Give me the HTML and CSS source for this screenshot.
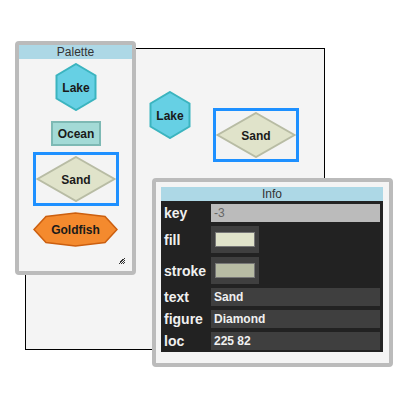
FILE: index.html
```html
<!DOCTYPE html>
<html lang="en">
<head>
  <meta charset="UTF-8" />
  <title>Diagram Editor</title>
  <link rel="stylesheet" href="styles.css">
</head>
<body>
  <div class="stage">
    <!-- Main diagram canvas -->
    <div class="diagram">
      <svg class="node node-lake" width="42" height="48" viewBox="0 0 42 48">
        <polygon points="21,1 40.5,12.5 40.5,35.5 21,47 1.5,35.5 1.5,12.5" fill="#66d0e4" stroke="#3bb4bf" stroke-width="2"/>
        <text x="21" y="28.5" class="label">Lake</text>
      </svg>
      <div class="node node-sand selected">
        <svg width="80" height="46" viewBox="0 0 80 46">
          <polygon points="40,1 78.5,23 40,45 1.5,23" fill="#e0e3ca" stroke="#b8bca4" stroke-width="2"/>
          <text x="40" y="27.5" class="label">Sand</text>
        </svg>
      </div>
    </div>

    <!-- Palette window -->
    <div class="palette">
      <div class="panel-title">Palette</div>
      <div class="palette-items">
        <svg class="lake" width="42" height="48" viewBox="0 0 42 48">
          <polygon points="21,1 40.5,12.5 40.5,35.5 21,47 1.5,35.5 1.5,12.5" fill="#66d0e4" stroke="#3bb4bf" stroke-width="2"/>
          <text x="21" y="28.5" class="label">Lake</text>
        </svg>
        <svg class="ocean" width="50" height="25" viewBox="0 0 50 25">
          <rect x="1" y="1" width="48" height="23" fill="#a3dad6" stroke="#7db9b4" stroke-width="2"/>
          <text x="25" y="17" class="label">Ocean</text>
        </svg>
        <div class="selected">
          <svg width="80" height="46" viewBox="0 0 80 46">
            <polygon points="40,1 78.5,23 40,45 1.5,23" fill="#e0e3ca" stroke="#b8bca4" stroke-width="2"/>
            <text x="40" y="27.5" class="label">Sand</text>
          </svg>
        </div>
        <svg class="goldfish" width="85" height="35" viewBox="0 0 85 35">
          <polygon points="1,17.5 13,4.5 42.5,1 72,4.5 84,17.5 72,30.5 42.5,34 13,30.5" fill="#f48a2e" stroke="#cc5f0f" stroke-width="1.5"/>
          <text x="42.5" y="22" class="label">Goldfish</text>
        </svg>
      </div>
      <svg class="grip" width="7" height="7" viewBox="0 0 7 7">
        <path d="M6 0 L0 6 M6 2 L2 6 M6 4 L4 6 M4 1 L1 4 M5 3 L3 5" stroke="#333" stroke-width="1"/>
      </svg>
    </div>

    <!-- Info / inspector window -->
    <div class="info">
      <div class="panel-title">Info</div>
      <div class="inspector">
        <div class="prop">key</div>
        <div class="field readonly">-3</div>
        <div class="prop">fill</div>
        <div class="swatch-box"><div class="swatch fill-swatch"></div></div>
        <div class="prop">stroke</div>
        <div class="swatch-box"><div class="swatch stroke-swatch"></div></div>
        <div class="prop">text</div>
        <div class="field">Sand</div>
        <div class="prop">figure</div>
        <div class="field">Diamond</div>
        <div class="prop">loc</div>
        <div class="field">225 82</div>
      </div>
    </div>
  </div>
</body>
</html>
```

FILE: styles.css
```css
body {
  margin: 0;
  font-family: "Liberation Sans", Arial, sans-serif;
  background: #fff;
}

/* Whole picture */
.stage {
  position: relative;
  width: 400px;
  height: 400px;
  padding: 48px 0 0 25px;
  box-sizing: border-box;
}

/* Diagram canvas */
.diagram {
  position: relative;
  width: 300px;
  height: 302px;
  box-sizing: border-box;
  border: 1px solid #000;
  background: #f4f4f4;
}

.node {
  position: absolute;
  display: block;
}
.node-lake {
  left: 123px;
  top: 42px;
}
.node-sand {
  left: 187px;
  top: 59px;
}

/* Node text */
.label {
  font: bold 12px "Liberation Sans", Arial, sans-serif;
  fill: #1a1a1a;
  text-anchor: middle;
}

/* Selection adornment */
.selected {
  border: 3px solid #1e90ff;
  padding: 1px 0;
  width: 80px;
  display: flex;
  justify-content: center;
}
.selected svg {
  display: block;
}

/* Floating windows */
.palette,
.info {
  position: absolute;
  background: #f4f4f4;
  border: 4px solid #bbb;
  border-radius: 4px;
  box-sizing: border-box;
}

.palette {
  left: 15px;
  top: 41px;
  width: 121px;
  height: 234px;
}

.panel-title {
  height: 14px;
  line-height: 14px;
  background: #add8e6;
  color: #333;
  font-size: 12px;
  text-align: center;
}

.palette-items {
  display: flex;
  flex-direction: column;
  align-items: center;
  padding-top: 4px;
}
.palette-items svg {
  display: block;
}
.palette-items .ocean {
  margin-top: 10px;
}
.palette-items .selected {
  margin-top: 6px;
  margin-left: 1px;
}
.palette-items .goldfish {
  margin-top: 6px;
}

.grip {
  position: absolute;
  right: 6px;
  bottom: 6px;
}

/* Inspector */
.info {
  left: 152px;
  top: 178px;
  width: 241px;
  height: 189px;
  padding: 5px 6px 11px 5px;
}

.inspector {
  display: grid;
  grid-template-columns: 47px 1fr;
  row-gap: 4px;
  align-items: center;
  background: #222;
  padding: 3px 3px 2px 3px;
}

.prop {
  color: #f0f0f0;
  font-weight: bold;
  font-size: 14px;
}

.field {
  height: 18px;
  line-height: 18px;
  background: #3f3f3f;
  color: #f0f0f0;
  font-weight: bold;
  font-size: 12px;
  padding-left: 3px;
}
.field.readonly {
  background: #bbb;
  color: #666;
  font-weight: normal;
}

.swatch-box {
  width: 48px;
  height: 27px;
  box-sizing: border-box;
  padding: 6px 4px;
  background: #3f3f3f;
}
.swatch {
  height: 15px;
  box-sizing: border-box;
  border: 1px solid #777;
}
.fill-swatch {
  background: #e0e3ca;
}
.stroke-swatch {
  background: #b8bca4;
}
```
